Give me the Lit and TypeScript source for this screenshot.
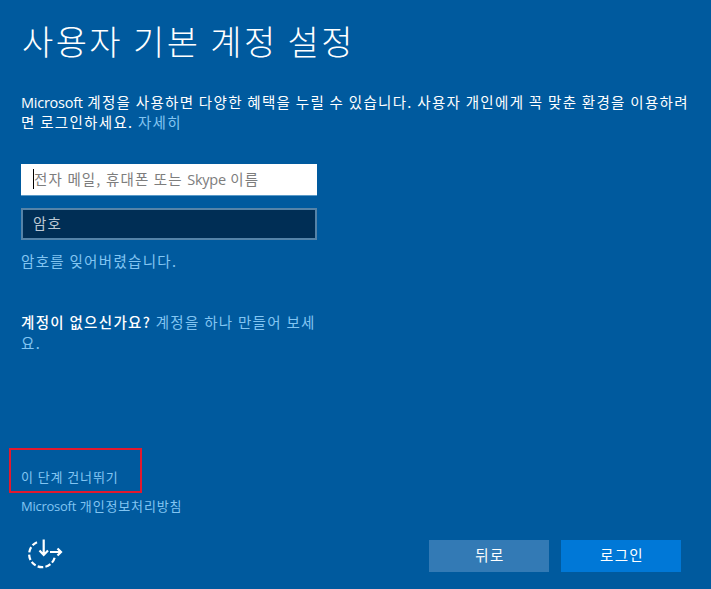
import { LitElement, html, css } from "lit";
import { customElement } from "lit/decorators.js";

@customElement("app-root")
export class AppRoot extends LitElement {
  static styles = css`
    :host {
      display: block;
      width: 711px;
      height: 589px;
      background: #005a9e;
      color: #fff;
      font-family: "Noto Sans CJK KR", "Noto Sans", sans-serif;
      overflow: hidden;
    }
    .page {
      height: 589px;
      box-sizing: border-box;
      padding: 16px 20px 17px 21px;
      display: flex;
      flex-direction: column;
    }
    h1 {
      margin: 0 0 0 1px;
      font-size: 34px;
      font-weight: 300;
      line-height: 50px;
      letter-spacing: 2.4px;
    }
    .intro {
      margin: 26px 0 0;
      font-size: 14.5px;
      line-height: 19px;
      letter-spacing: 1.3px;
    }
    .lat {
      font-family: "Open Sans", sans-serif;
      letter-spacing: -0.25px;
    }
    a {
      color: #82c5f2;
      text-decoration: none;
    }
    .fields {
      margin-top: 33px;
      width: 296px;
      display: flex;
      flex-direction: column;
      gap: 12px;
    }
    .field {
      height: 32px;
      box-sizing: border-box;
      padding-left: 12px;
      font-size: 14.5px;
      letter-spacing: 1.15px;
      line-height: 29px;
      display: flex;
    }
    .email {
      background: #fff;
      color: #7d7d7d;
      border-bottom: 1px solid #5a9ac8;
    }
    .caret {
      width: 1px;
      height: 20px;
      background: #000;
      margin: 5px 0 0;
    }
    .password {
      background: #002e55;
      color: #bcc8d4;
      border: 2px solid #5583a8;
      line-height: 26px;
      padding-left: 10px;
    }
    .forgot {
      margin-top: 11px;
      font-size: 14.5px;
      letter-spacing: 1.3px;
      line-height: 20px;
    }
    .signup {
      margin: 40px 0 0;
      width: 300px;
      font-size: 14.5px;
      letter-spacing: 1.3px;
      line-height: 21px;
    }
    .signup strong {
      font-weight: 500;
    }
    .spacer {
      flex: 1;
    }
    .skip {
      box-sizing: border-box;
      width: 133px;
      height: 45px;
      margin-left: -12px;
      border: 2px solid #e3192e;
      padding: 17px 0 0 10px;
      font-size: 13px;
      letter-spacing: 0.9px;
      line-height: 20px;
    }
    .privacy {
      margin-top: 4px;
      font-size: 13px;
      letter-spacing: 0.85px;
      line-height: 18px;
    }
    .footer {
      margin-top: 25px;
      display: flex;
      align-items: flex-start;
      justify-content: space-between;
    }
    .icon {
      margin: -4px 0 0 5px;
      display: block;
    }
    .buttons {
      display: flex;
      gap: 12px;
      margin-right: 10px;
    }
    button {
      width: 120px;
      height: 32px;
      border: 0;
      padding: 0 0 4px 2px;
      color: #fff;
      font: inherit;
      font-size: 14.5px;
      letter-spacing: 1.3px;
    }
    .back {
      background: #337ab5;
    }
    .login {
      background: #0078d7;
    }
  `;

  render() {
    return html`
      <div class="page">
        <h1>사용자 기본 계정 설정</h1>
        <p class="intro">
          <span class="lat">Microsoft</span> 계정을 사용하면 다양한 혜택을 누릴 수 있습니다. 사용자 개인에게 꼭 맞춘 환경을 이용하려면 로그인하세요.
          <a>자세히</a>
        </p>
        <div class="fields">
          <div class="field email"><span class="caret"></span><span>전자 메일, 휴대폰 또는 <span class="lat">Skype</span> 이름</span></div>
          <div class="field password">암호</div>
        </div>
        <a class="forgot">암호를 잊어버렸습니다.</a>
        <p class="signup"><strong>계정이 없으신가요?</strong> <a>계정을 하나 만들어 보세요.</a></p>
        <div class="spacer"></div>
        <div class="skip"><a>이 단계 건너뛰기</a></div>
        <a class="privacy"><span class="lat">Microsoft</span> 개인정보처리방침</a>
        <div class="footer">
          <svg class="icon" width="38" height="34" viewBox="0 0 38 34" fill="none" stroke="#fff" stroke-width="2.2">
            <path d="M11 6.2 A13 13 0 1 0 29 20" stroke-dasharray="5.5 2.2"></path>
            <path d="M17.7 3.5 V19 M13.5 14.5 L17.7 19 L22 14.5 M24 16 H35 M31.5 12.5 L35 16 L31.5 19.5"></path>
          </svg>
          <div class="buttons">
            <button class="back">뒤로</button>
            <button class="login">로그인</button>
          </div>
        </div>
      </div>
    `;
  }
}
